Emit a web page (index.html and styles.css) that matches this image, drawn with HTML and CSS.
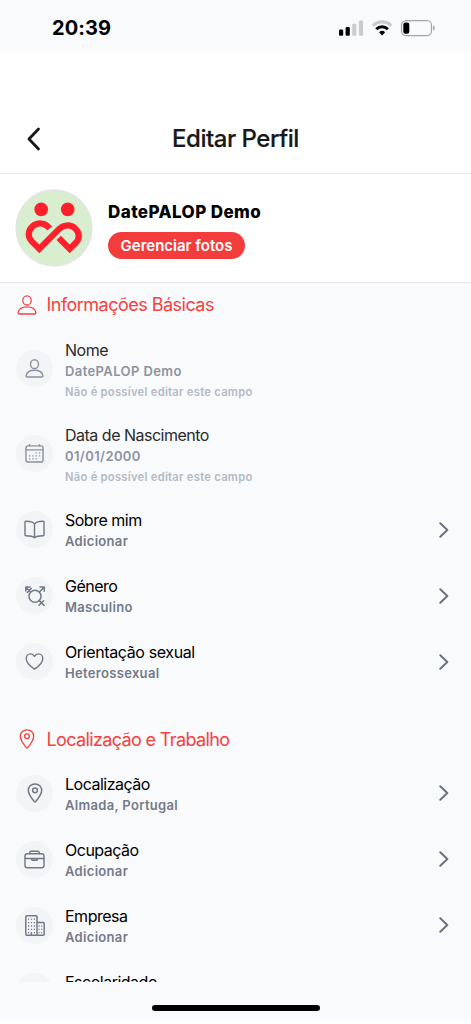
FILE: index.html
```html
<!DOCTYPE html>
<html lang="pt">
<head>
<meta charset="utf-8">
<title>Editar Perfil</title>
<link rel="stylesheet" href="styles.css">
</head>
<body>
<svg class="defs" aria-hidden="true">
  <symbol id="person" viewBox="0 0 20 20"><ellipse cx="10" cy="5.4" rx="4.200" ry="4.600"/><path d="M1.200 17.400c.7-3.800 4.600-5.600 8.800-5.600s8.100 1.800 8.800 5.600c.2 1-.3 1.600-1.200 1.600H2.400c-.9 0-1.400-.6-1.200-1.600z"/></symbol>
  <symbol id="calendar" viewBox="0 0 20 20"><rect x="1" y="2" width="18" height="17" rx="2.200"/><path d="M1 6.200h18M4.800.6V2M15.200.6V2"/><path class="dots" d="M11 9.300h1.400M14.600 9.300H16M4.200 12.500h1.400M7.600 12.500H9M11 12.500h1.400M14.600 12.500H16M4.200 15.700h1.400M7.600 15.700H9M11 15.700h1.400"/></symbol>
  <symbol id="book" viewBox="0 0 22 20"><path d="M11 4.200C9.200 2 5.500 1.300 1.800 1.400Q1 1.400 1 2.200V15.800q0 .8.800.8c3.700 0 7.400.4 9.200 2.200 1.800-1.800 5.500-2.200 9.200-2.200q.8 0 .8-.8V2.200q0-.8-.8-.8C16.500 1.300 12.800 2 11 4.200zV18.800"/></symbol>
  <symbol id="gender" viewBox="0 0 20 20"><circle cx="10" cy="10.300" r="6"/><path d="M14.400 6 19 1.200M15 1h4.200v4.200M5.600 6 .8 1.200M.8 5V1H5M2.300 6.400 6.200 2.400M14.300 14.600 19.200 19.500M14 19.300l4.600-4.600"/></symbol>
  <symbol id="heart" viewBox="0 0 20 20"><path d="M10 18C7.500 16.300 1.300 11.900 1.300 7 1.300 4 3.300 2 5.800 2c2 0 3.400 1.200 4.200 2.700C10.800 3.200 12.200 2 14.200 2c2.500 0 4.500 2 4.500 5 0 4.900-6.200 9.300-8.700 11z"/></symbol>
  <symbol id="pin" viewBox="0 0 20 20"><path d="M10 .9c-3.900 0-6.700 2.700-6.700 6.400 0 4 4.500 9.500 6 11.300q.7.800 1.400 0c1.500-1.800 6-7.300 6-11.300C16.700 3.600 13.900.9 10 .9z"/><circle cx="10" cy="7.300" r="2.400"/></symbol>
  <symbol id="case" viewBox="0 0 22 20"><rect x="1" y="4" width="20" height="14.600" rx="2.400"/><path d="M6 4V3q0-1.600 1.600-1.600h6.800Q16 1.400 16 3v1M1 9h20M8 9v1q0 .7.700.7h4.600q.7 0 .7-.7V9"/></symbol>
  <symbol id="building" viewBox="0 0 20 21"><path d="M12 20.200V1.800Q12 .8 11 .8H1.800q-1 0-1 1v17.400q0 1 1 1h16.400q1 0 1-1V8.600q0-1-1-1H12M6.400 20.200v-2.400"/><path class="dots" d="M3 4.200h1.200M5.900 4.200h1.200M8.800 4.200H10M3 7.600h1.200M5.900 7.600h1.200M8.800 7.600H10M3 11h1.200M5.900 11h1.200M8.800 11H10M3 14.400h1.200M5.900 14.400h1.200M8.800 14.400H10M3 17.600h1.200M8.800 17.600H10M13.600 11h1M16.200 11h1M13.600 14.400h1M16.200 14.400h1M13.600 17.600h1M16.200 17.600h1"/></symbol>
  <symbol id="chevron" viewBox="0 0 10 16"><path d="M1.300 1.300 8.300 8l-7 6.700"/></symbol>
</svg>
<div class="phone">
  <div class="status">
    <span class="time">20:39</span>
    <svg class="signals" viewBox="0 0 98 18">
      <rect x="0" y="10.500" width="4.200" height="6.300" rx="1.200"/>
      <rect x="6.600" y="8" width="4.200" height="8.800" rx="1.200"/>
      <g fill="#cacbcd"><rect x="13.200" y="4.800" width="4.200" height="12" rx="1.200"/><rect x="19.900" y="1.500" width="4.200" height="15.300" rx="1.200"/></g>
      <path d="M34 6.600a13.200 13.200 0 0 1 18.200 0" fill="none" stroke="#cacbcd" stroke-width="3.300"/>
      <path d="M37.300 10.200a8.300 8.300 0 0 1 11.600 0" fill="none" stroke="#000" stroke-width="3"/>
      <path d="M40.100 13.300a4.300 4.300 0 0 1 6 0l-3 3.300z"/>
      <rect x="62.500" y="1.600" width="30" height="15" rx="4.600" fill="none" stroke="#a4a5a8" stroke-width="1.200"/>
      <rect x="64.300" y="3.500" width="6" height="11.300" rx="2.200"/>
      <path d="M94.200 6.600q1.700.6 1.700 2.500t-1.700 2.500z" fill="#a4a5a8"/>
    </svg>
  </div>
  <header class="nav">
    <svg class="back" viewBox="0 0 16 24"><path d="M13.500 2 4 12l9.500 10"/></svg>
    <h1 class="heading">Editar Perfil</h1>
  </header>
  <section class="profile">
    <svg class="avatar" viewBox="0 0 78 78">
      <circle cx="39" cy="39" r="38" fill="#d9edcf" stroke="#e1e4e8" stroke-width="1.300"/>
      <circle cx="26.200" cy="20.400" r="6.800" fill="#ff202c"/><circle cx="52.700" cy="20.400" r="6.800" fill="#ff202c"/>
      <path d="M34.700 39.400C30 33.400 22.800 32.900 17.400 37.400c-5 4.700-4.700 10.800-.4 15.200L24.300 59.900 43.200 40.900c5-5.300 12-6 17-1.500 5 4.800 4.600 10.400.2 14.800l-5.700 5.700-11-11" fill="none" stroke="#ff202c" stroke-width="6.200"/>
    </svg>
    <div class="identity">
      <div class="name">DatePALOP Demo</div>
      <button class="photos">Gerenciar fotos</button>
    </div>
  </section>
  <main class="list">
    <h2 class="section"><svg class="section-icon"><use href="#person"/></svg><span>Informações Básicas</span></h2>
    <div class="row locked"><span class="badge"><svg class="icon"><use href="#person"/></svg></span><div class="text"><div class="title">Nome</div><div class="value">DatePALOP Demo</div><div class="note">Não é possível editar este campo</div></div></div>
    <div class="row locked"><span class="badge"><svg class="icon"><use href="#calendar"/></svg></span><div class="text"><div class="title">Data de Nascimento</div><div class="value">01/01/2000</div><div class="note">Não é possível editar este campo</div></div></div>
    <div class="row"><span class="badge"><svg class="icon wide"><use href="#book"/></svg></span><div class="text"><div class="title">Sobre mim</div><div class="value">Adicionar</div></div><svg class="chevron"><use href="#chevron"/></svg></div>
    <div class="row"><span class="badge"><svg class="icon large"><use href="#gender"/></svg></span><div class="text"><div class="title">Género</div><div class="value">Masculino</div></div><svg class="chevron"><use href="#chevron"/></svg></div>
    <div class="row"><span class="badge"><svg class="icon"><use href="#heart"/></svg></span><div class="text"><div class="title spaced">Orientação sexual</div><div class="value">Heterossexual</div></div><svg class="chevron"><use href="#chevron"/></svg></div>
    <h2 class="section next"><svg class="section-icon"><use href="#pin"/></svg><span>Localização e Trabalho</span></h2>
    <div class="row low"><span class="badge"><svg class="icon large"><use href="#pin"/></svg></span><div class="text"><div class="title">Localização</div><div class="value">Almada, Portugal</div></div><svg class="chevron"><use href="#chevron"/></svg></div>
    <div class="row low"><span class="badge"><svg class="icon wide"><use href="#case"/></svg></span><div class="text"><div class="title">Ocupação</div><div class="value">Adicionar</div></div><svg class="chevron"><use href="#chevron"/></svg></div>
    <div class="row low"><span class="badge"><svg class="icon tall"><use href="#building"/></svg></span><div class="text"><div class="title">Empresa</div><div class="value">Adicionar</div></div><svg class="chevron"><use href="#chevron"/></svg></div>
    <div class="row low"><span class="badge"></span><div class="text partial"><div class="title">Escolaridade</div></div></div>
  </main>
  <footer class="home"><span class="indicator"></span></footer>
</div>
</body>
</html>
```
FILE: styles.css
```css
* { box-sizing: border-box; }
body { margin: 0; background: #fff; font-family: Inter, "Liberation Sans", sans-serif; color: #000; }
.defs { display: none; }
.phone { display: flex; flex-direction: column; height: 1020px; overflow: hidden; background: #f9fafc; }
.status { flex: none; height: 52px; display: flex; justify-content: space-between; align-items: flex-start; padding: 15px 34px 0 52px; }
.time { font-size: 20px; line-height: 26px; font-weight: 700; letter-spacing: 0.1px; }
.signals { width: 98px; height: 18px; margin-top: 4px; }
.nav { flex: none; height: 122px; background: #fff; border-bottom: 1px solid #e9eaed; display: grid; grid-template-columns: 60px 1fr 60px; align-items: center; padding-top: 52px; }
.back { width: 16px; height: 24px; margin-left: 25px; fill: none; stroke: #18181b; stroke-width: 2.800; stroke-linecap: round; stroke-linejoin: round; }
.heading { margin: 0; text-align: center; font-size: 24px; line-height: 30px; font-weight: 500; color: #18181b; letter-spacing: -0.5px; -webkit-text-stroke: 0.2px #18181b; padding-top: 1px; }
.profile { flex: none; height: 109px; background: #fff; border-bottom: 1px solid #e2e4e8; display: flex; align-items: center; gap: 15px; padding-left: 15px; }
.avatar { width: 78px; height: 78px; }
.identity { display: flex; flex-direction: column; align-items: flex-start; gap: 9px; padding-top: 3px; }
.name { font-size: 17px; line-height: 22px; font-weight: 800; letter-spacing: 0.42px; }
.photos { border: 0; border-radius: 14px; height: 27px; width: 137px; padding: 0; background: #f33d3d; color: #fff; font: 600 15px/27px Inter, sans-serif; letter-spacing: 0; white-space: nowrap; }
.list { flex: none; height: 699px; overflow: hidden; }
.section { margin: 0; height: 43px; display: flex; align-items: center; gap: 9.5px; padding-left: 17px; color: #f5413f; font-weight: 400; font-size: 18px; letter-spacing: -0.52px; }
.section-icon { width: 20px; height: 20px; fill: none; stroke: #f5413f; stroke-width: 1.300; stroke-linejoin: round; }
.next { margin-top: 22.5px; letter-spacing: -0.64px; }
.row { height: 66px; display: flex; align-items: center; padding: 0 22px 1px 16px; }
.locked { height: 85.5px; }
.badge { flex: none; width: 37px; height: 37px; border-radius: 50%; background: #f3f4f6; display: flex; align-items: center; justify-content: center; margin-right: 12px; }
.icon { width: 19px; height: 19px; fill: none; stroke: #727986; stroke-width: 1.500; stroke-linejoin: round; stroke-linecap: round; }
.wide { width: 21px; }
.large { width: 20px; height: 20px; }
.tall { height: 21px; width: 20px; }
.dots { stroke-width: 1.300; stroke-linecap: butt; }
.text { flex: 1; padding-top: 2.500px; }
.locked .text { padding-top: 5px; }
.low .text { padding-top: 4px; }
.low .partial { padding-bottom: 21px; }
.title { font-size: 16px; line-height: 21px; letter-spacing: -0.5px; }
.title.spaced { letter-spacing: -0.38px; }
.value { font-size: 13px; line-height: 21px; font-weight: 600; color: #737a88; letter-spacing: 0.32px; }
.note { font-size: 11.2px; line-height: 20.5px; font-weight: 600; color: #b3b9c5; letter-spacing: 0.27px; }
.locked .title { color: #2a2a2b; }
.locked .value { color: #8c93a0; letter-spacing: 0.4px; }
.locked .icon { stroke: #8c93a0; }
.chevron { width: 10px; height: 16px; fill: none; stroke: #6b7280; stroke-width: 2; stroke-linecap: round; stroke-linejoin: round; }
.home { flex: 1; display: flex; justify-content: center; padding-top: 23px; }
.indicator { width: 168px; height: 6px; border-radius: 3px; background: #000; }
```
